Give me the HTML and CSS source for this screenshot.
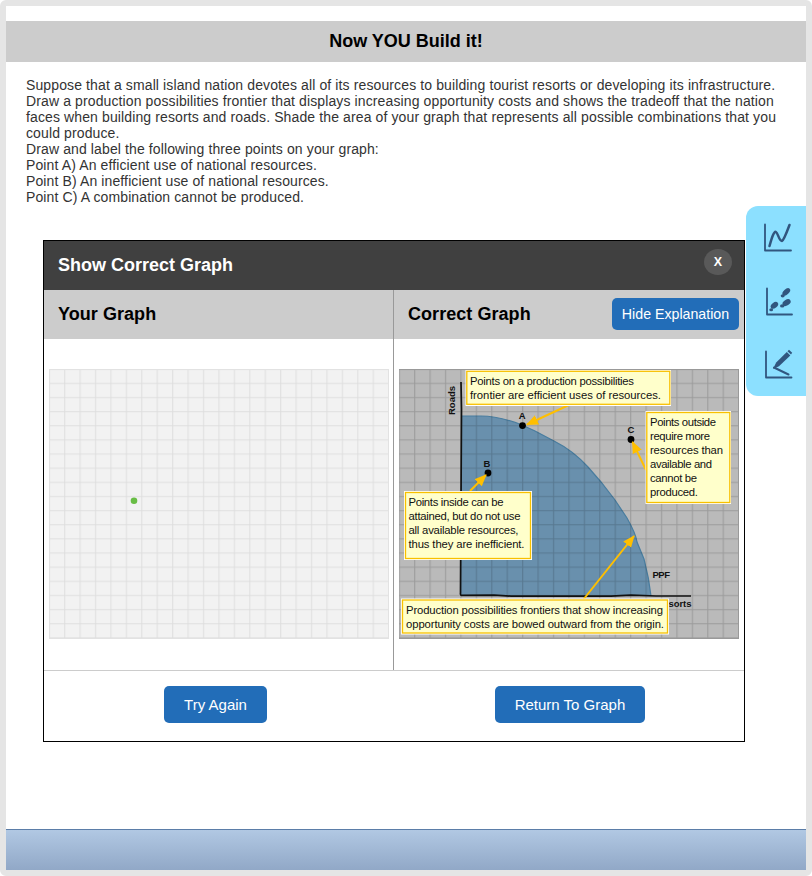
FILE: index.html
```html
<!DOCTYPE html>
<html lang="en">
<head>
<meta charset="utf-8">
<title>Now YOU Build it!</title>
<link rel="stylesheet" href="styles.css">
</head>
<body>
<main class="frame">
  <h1 class="title">Now YOU Build it!</h1>
  <div class="prompt">
    <div>Suppose that a small island nation devotes all of its resources to building tourist resorts or developing its infrastructure.</div>
    <div>Draw a production possibilities frontier that displays increasing opportunity costs and shows the tradeoff that the nation</div>
    <div>faces when building resorts and roads. Shade the area of your graph that represents all possible combinations that you</div>
    <div>could produce.</div>
    <div>Draw and label the following three points on your graph:</div>
    <div>Point A) An efficient use of national resources.</div>
    <div>Point B) An inefficient use of national resources.</div>
    <div>Point C) A combination cannot be produced.</div>
  </div>
  <section class="dialog">
    <header class="dialog-head"><h2>Show Correct Graph</h2><button class="close">X</button></header>
    <div class="columns">
      <div class="column">
        <div class="column-head"><h2>Your Graph</h2></div>
        <svg class="graph" width="340" height="270" viewBox="0 0 340 270">
          <defs><pattern id="g1" x="15" y="13.7" width="15.43" height="14.14" patternUnits="userSpaceOnUse"><path d="M.7 0V15M0 .7H16" stroke="#dedede" stroke-width="1"/></pattern></defs>
          <rect width="340" height="270" fill="#f2f2f2"/><rect width="340" height="270" fill="url(#g1)"/>
          <path d="M0 .5H340M.5 0V270M339.5 0V270M0 269.5H340" stroke="#e2e2e2"/>
          <circle cx="85" cy="131.7" r="3.3" fill="#68bd45"/>
        </svg>
      </div>
      <div class="column">
        <div class="column-head"><h2>Correct Graph</h2><button class="hide">Hide Explanation</button></div>
        <svg class="graph" width="340" height="270" viewBox="0 0 340 270">
          <defs>
            <pattern id="g2" x="15" y="13.7" width="15.43" height="14.14" patternUnits="userSpaceOnUse"><path d="M.7 0V15M0 .7H16" stroke="#000" stroke-opacity=".17" stroke-width="1"/></pattern>
            <marker id="arrow" viewBox="0 0 12 10" refX="11" refY="5" markerWidth="12" markerHeight="11" markerUnits="userSpaceOnUse" orient="auto"><path d="M0 0L12 5L0 10z" fill="#ffbf00"/></marker>
          </defs>
          <rect width="340" height="270" fill="#bababa"/>
          <path d="M62 47H82Q100 47 123 56L136 62L155 72C169 79 179 87 189 98L202 113L216 131L228 149Q237 165 238 173L245 190Q250 209 252 227H62Z" fill="#6990ad"/>
          <path d="M62 47H82Q100 47 123 56L136 62L155 72C169 79 179 87 189 98L202 113L216 131L228 149Q237 165 238 173L245 190Q250 209 252 227" fill="none" stroke="#497d9f" stroke-width="1.2"/>
          <rect width="340" height="270" fill="url(#g2)"/>
          <path d="M0 .5H340M339.5 0V270M0 269.5H340" stroke="#999"/>
          <path d="M62 13L62.5 40L61.5 224Q61 227 64 226.3L95 226.2L112 227.1H212L232 226.2L257 227H292" fill="none" stroke="#111" stroke-width="1.7"/>
          <g fill="#000"><circle cx="123.5" cy="56.6" r="3.4"/><circle cx="89" cy="104" r="3.4"/><circle cx="232" cy="70.5" r="3.4"/></g>
          <g class="label"><text x="119.8" y="50">A</text><text x="84.5" y="98">B</text><text x="228.5" y="64">C</text><text x="253.5" y="209" textLength="17.5">PPF</text><text x="269.5" y="238" textLength="23">sorts</text><text transform="translate(56 46) rotate(-90)" textLength="29">Roads</text></g>
          <g stroke="#ffbf00" stroke-width="2" fill="none">
            <path d="M172 35L128 55.5" marker-end="url(#arrow)"/><path d="M71 122L87 106" marker-end="url(#arrow)"/><path d="M247 101L233.5 73" marker-end="url(#arrow)"/><path d="M184 231L235 167" marker-end="url(#arrow)"/>
          </g>
          <g class="halo"><rect x="66.5" y="1" width="205.5" height="36"/><rect x="246.5" y="42" width="85.5" height="93"/><rect x="5" y="122" width="128" height="69"/><rect x="2" y="229.5" width="268" height="36"/></g>
          <g class="note"><rect x="67.8" y="2.3" width="203" height="33"/><rect x="247.8" y="43.5" width="83" height="90"/><rect x="6.5" y="123.5" width="125" height="66"/><rect x="3.5" y="231" width="265" height="33"/></g>
          <g class="note-text">
            <text x="71" y="16" textLength="164">Points on a production possibilities</text><text x="71" y="30" textLength="191">frontier are efficient uses of resources.</text>
            <text x="251" y="57" textLength="66">Points outside</text><text x="251" y="71" textLength="60">require more</text><text x="251" y="85" textLength="73">resources than</text><text x="251" y="99" textLength="62">available and</text><text x="251" y="113" textLength="47">cannot be</text><text x="251" y="127" textLength="48">produced.</text>
            <text x="9.5" y="137" textLength="95">Points inside can be</text><text x="9.5" y="151" textLength="112">attained, but do not use</text><text x="9.5" y="165" textLength="110">all available resources,</text><text x="9.5" y="179" textLength="116">thus they are inefficient.</text>
            <text x="7" y="244.5" textLength="257">Production possibilities frontiers that show increasing</text><text x="7" y="258.5" textLength="258">opportunity costs are bowed outward from the origin.</text>
          </g>
        </svg>
      </div>
    </div>
    <footer class="actions"><div><button class="try">Try Again</button></div><div><button class="return">Return To Graph</button></div></footer>
  </section>
  <nav class="tools">
    <svg width="60" height="190" viewBox="0 0 60 190" fill="none" stroke="#31567f" stroke-width="2">
      <g stroke-linecap="round" stroke-linejoin="round"><path d="M19 18.5V44.5H45M21 82.5V108.5H46M20 145.5V171.5H45.5" stroke-width="1.8"/><path d="M23.5 40C26 31 28 25 30 26C32 27 33 35 36 35C38 34 42 23 43.5 19" stroke-width="2.5"/></g>
      <g fill="#31567f" stroke="none"><ellipse cx="40.3" cy="85.9" rx="4.6" ry="2.7" transform="rotate(-43 40.3 85.9)"/><ellipse cx="36.7" cy="89.8" rx="2" ry="1.6"/><ellipse cx="28.4" cy="99.3" rx="4.2" ry="2.7" transform="rotate(-38 28.4 99.3)"/><ellipse cx="25.2" cy="103.7" rx="1.9" ry="1.5"/><ellipse cx="40.6" cy="96.6" rx="4.4" ry="2.9" transform="rotate(-32 40.6 96.6)"/><ellipse cx="36.2" cy="99.9" rx="2.2" ry="1.6"/>
      <path d="M27 163L30.2 156.5L40.8 146L44.3 149.5L33 160.2Z"/><path d="M41.5 145.2L43 143.7L46.2 146.8L45 148.5Z"/></g>
      <path d="M28 161.5L42.5 168.5" stroke-linecap="round"/>
    </svg>
  </nav>
  <div class="bottom-bar"></div>
</main>
</body>
</html>
```
FILE: styles.css
```css
*{box-sizing:border-box}
body{margin:0;background:#fff;font-family:"Liberation Sans",Arial,sans-serif}
.frame{position:relative;width:812px;height:876px;border:6px solid #e5e5e5;border-radius:6px;background:#fff;padding-top:15px;display:flex;flex-direction:column}
h1,h2{margin:0;font-size:18px;line-height:20px;font-weight:bold}
.title{height:41px;padding-bottom:2px;background:#ccc;display:flex;align-items:center;justify-content:center;flex:none}
.prompt{margin:15px 0 0 20px;font-size:14px;line-height:16px;letter-spacing:.117px;color:#333;white-space:nowrap}
.dialog{width:702px;height:502px;margin:35px 0 0 37px;border:1px solid #000;flex:none}
.dialog-head{height:49px;background:#404040;color:#fff;display:flex;justify-content:space-between;padding:0 12px 0 14px;align-items:center}
.dialog-head h2{margin-bottom:2px}
button{border:0;padding:0;background:#226db8;color:#fff;font-family:inherit;font-size:15px;border-radius:5px}
.close{width:28px;height:26px;border-radius:50%;background:#595959;font-size:12.5px;font-weight:bold;margin-bottom:7px;padding-bottom:1px}
.columns{display:grid;grid-template-columns:349px 351px;height:381px;border-bottom:1px solid #ccc}
.column+.column{border-left:1px solid #999}
.column-head{height:49px;background:#ccc;padding:0 5px 0 14px;display:flex;align-items:center;justify-content:space-between}
.column-head h2{margin-bottom:1px;letter-spacing:.05px}
.hide{width:127px;height:32px;font-size:14.2px;margin-bottom:2px}
.graph{display:block;margin:30px 0 0 5px}
.label{font-size:9.5px;font-weight:bold;fill:#111}
.halo{fill:#fff}
.note{fill:#ffffcb;stroke:#f8c000;stroke-width:1.3}
.note-text{font-size:11.3px;fill:#111}
.actions{display:grid;grid-template-columns:350px 350px;padding-top:15px}
.actions div{display:flex}
.actions button{height:37px}
.try{width:103px;margin-left:120px}
.return{width:150px;margin-left:101px}
.tools{position:absolute;right:0;top:200px;width:60px;height:190px;background:#8ce0ff;border-radius:12px 0 0 12px}
.tools svg{display:block}
.bottom-bar{height:41px;margin-top:auto;border-top:1px solid #5b7da8;background:linear-gradient(#b1c8e3,#91a8c7)}
```
